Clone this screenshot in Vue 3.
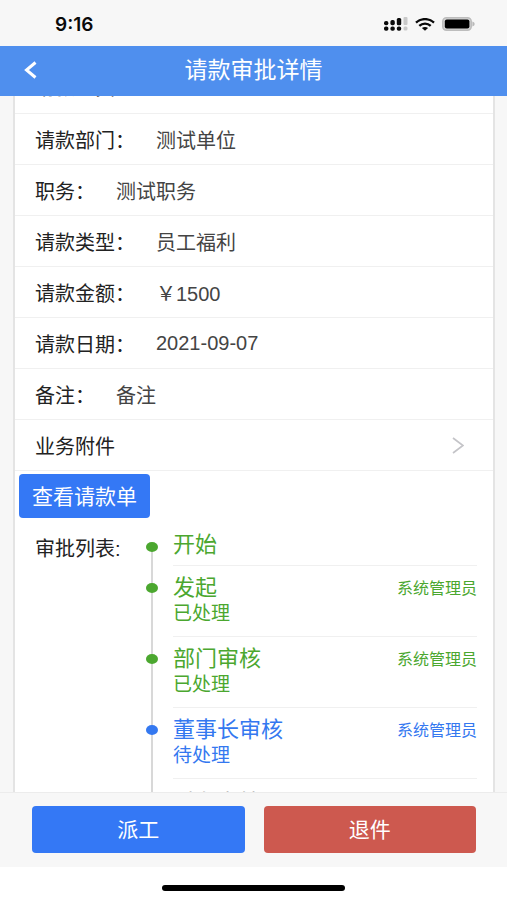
<script setup>
const fields = [
  { label: '请款人员：', value: '' },
  { label: '请款部门：', value: '测试单位' },
  { label: '职务：', value: '测试职务' },
  { label: '请款类型：', value: '员工福利' },
  { label: '请款金额：', value: '￥1500' },
  { label: '请款日期：', value: '2021-09-07' },
  { label: '备注：', value: '备注' }
]

const steps = [
  { name: '开始', tone: 'done' },
  { name: '发起', status: '已处理', person: '系统管理员', tone: 'done' },
  { name: '部门审核', status: '已处理', person: '系统管理员', tone: 'done' },
  { name: '董事长审核', status: '待处理', person: '系统管理员', tone: 'active' },
  { name: '财务审核', tone: 'idle' }
]
</script>

<template>
  <div class="screen">
    <div class="status-bar">
      <span class="clock">9:16</span>
      <div class="status-icons">
        <svg width="24" height="14" viewBox="0 0 24 14" aria-hidden="true">
          <g fill="#c9c9c9">
            <rect x="19.5" y="0" width="4" height="8" rx="1" />
            <rect x="19.5" y="9.5" width="4" height="4" rx="1.5" />
          </g>
          <g fill="#0a0a0a">
            <rect x="0" y="4" width="4.4" height="4.2" rx="2" />
            <rect x="6.4" y="3" width="4.4" height="5.2" rx="1.8" />
            <rect x="12.8" y="1" width="4.4" height="7.2" rx="1.5" />
            <rect x="0" y="9.5" width="4.4" height="4.2" rx="1.8" />
            <rect x="6.4" y="9.5" width="4.4" height="4.2" rx="1.8" />
            <rect x="12.8" y="9.5" width="4.4" height="4.2" rx="1.8" />
          </g>
        </svg>
        <svg width="20" height="13" viewBox="0 0 20 13" aria-hidden="true">
          <g fill="none" stroke="#0a0a0a" stroke-width="2.3">
            <path d="M1 4.6C6-.1 14-.1 19 4.6" />
            <path d="M4.3 7.9c3.2-3 8.2-3 11.4 0" />
          </g>
          <path d="M6.9 10.1c1.8-1.5 4.4-1.5 6.2 0L10 12.8z" fill="#0a0a0a" />
        </svg>
        <svg width="33" height="14" viewBox="0 0 33 14" aria-hidden="true">
          <rect x="0.8" y="0.8" width="28.4" height="12.4" rx="3.6" fill="#d6d6d6" stroke="#bdbdbd" stroke-width="1.6" />
          <rect x="2.8" y="2.5" width="24.6" height="9" rx="2" fill="#000" />
          <path d="M30.4 4.6c3 .8 3 4 0 4.8z" fill="#b9b9b9" />
        </svg>
      </div>
    </div>

    <header class="nav">
      <button class="back" type="button" aria-label="返回">
        <svg width="13" height="18" viewBox="0 0 13 18" aria-hidden="true">
          <path d="M11.5 1.5L2.5 9l9 7.5" fill="none" stroke="#fff" stroke-width="3" />
        </svg>
      </button>
      <h1 class="title">请款审批详情</h1>
    </header>

    <main class="content">
      <section class="card">
        <dl class="fields">
          <div v-for="f in fields" :key="f.label" class="row">
            <dt>{{ f.label }}</dt>
            <dd>{{ f.value }}</dd>
          </div>
        </dl>
        <a class="row attachment" href="#">
          <span>业务附件</span>
          <svg width="12" height="17" viewBox="0 0 12 17" aria-hidden="true">
            <path d="M1 1l10 7.5L1 16" fill="none" stroke="#c4c4c8" stroke-width="1.7" />
          </svg>
        </a>
        <button class="view" type="button">查看请款单</button>
        <div class="approval">
          <h2 class="approval-title">审批列表:</h2>
          <ol class="timeline">
            <li v-for="s in steps" :key="s.name" class="step" :class="s.tone">
              <div class="marker"><span class="dot"></span></div>
              <div class="step-body">
                <div class="step-text">
                  <span class="step-name">{{ s.name }}</span>
                  <span v-if="s.status" class="step-status">{{ s.status }}</span>
                </div>
                <span v-if="s.person" class="person">{{ s.person }}</span>
              </div>
            </li>
          </ol>
        </div>
      </section>
    </main>

    <footer class="actions">
      <button class="action assign" type="button">派工</button>
      <button class="action reject" type="button">退件</button>
    </footer>
    <div class="home-area"><span class="home-bar"></span></div>
  </div>
</template>

<style>
body {
  margin: 0;
  background: #fff;
}
</style>

<style scoped>
* {
  box-sizing: border-box;
}

.screen {
  display: flex;
  flex-direction: column;
  height: 100vh;
  overflow: hidden;
  background: #f7f7f7;
  color: #222;
  font-family: "Liberation Sans", "Noto Sans CJK SC", sans-serif;
  font-size: 20px;
}

button {
  border: 0;
  padding: 0;
  font-family: inherit;
  color: #fff;
}

.status-bar {
  flex: none;
  display: flex;
  align-items: center;
  justify-content: space-between;
  height: 46px;
  padding: 2px 32px 0 55px;
}

.clock {
  font-family: Inter, sans-serif;
  font-size: 19px;
  font-weight: 600;
  color: #0a0a0a;
}

.status-icons {
  display: flex;
  align-items: center;
  gap: 7px;
}

.nav {
  flex: none;
  display: grid;
  grid-template-columns: 48px 1fr 48px;
  align-items: center;
  height: 50px;
  padding-bottom: 2px;
  background: #4f8fee;
}

.back {
  display: flex;
  align-items: center;
  height: 48px;
  padding-left: 24px;
  background: none;
}

.title {
  margin: 0;
  text-align: center;
  font-size: 23px;
  font-weight: 400;
  line-height: 44px;
  color: #fff;
}

.content {
  flex: 1;
  min-height: 0;
  overflow: hidden;
  padding: 0 12px 0 13px;
}

/* The list is scrolled part of the way through its first row. */
.card {
  margin-top: -33px;
  border: solid #e4e4e4;
  border-width: 0 2px;
  background: #fff;
}

.fields {
  margin: 0;
}

.row {
  display: flex;
  align-items: center;
  height: 51px;
  padding: 0 29px 0 20px;
  border-bottom: 1px solid #f0f0f0;
}

.fields .row:first-child {
  padding-bottom: 4px;
}

dt {
  flex: none;
}

dd {
  margin: 0 0 0 21px;
  color: #444;
}

.attachment {
  justify-content: space-between;
  color: inherit;
  text-decoration: none;
}

.view {
  display: block;
  height: 44px;
  margin: 3px 0 0 4px;
  padding: 0 13px 3px;
  border-radius: 4px;
  background: #3478f5;
  font-size: 21px;
}

.approval {
  display: flex;
  padding: 10px 16px 0 20px;
}

.approval-title {
  flex: none;
  width: 110px;
  margin: 6px 0 0;
  font-size: 20px;
  font-weight: 400;
  line-height: 30px;
}

.timeline {
  flex: 1;
  margin: 0;
  padding: 0;
  list-style: none;
}

.step {
  display: flex;
}

.marker {
  position: relative;
  flex: none;
  width: 14px;
  margin-right: 14px;
}

.marker::before {
  content: "";
  position: absolute;
  top: 0;
  bottom: 0;
  left: 6px;
  width: 2px;
  background: #d8d8d8;
}

.step:first-child .marker::before {
  top: 20px;
}

.dot {
  position: absolute;
  top: 17px;
  left: 1px;
  width: 12px;
  height: 10px;
  border-radius: 50%;
  background: currentColor;
}

.step-body {
  flex: 1;
  display: flex;
  justify-content: space-between;
  min-height: 71px;
  padding-top: 8px;
  border-bottom: 1px solid #f0f0f0;
}

.step:first-child .step-body {
  min-height: 38px;
  padding-top: 3px;
}

.step:first-child .dot {
  top: 14px;
}

.step-text {
  display: flex;
  flex-direction: column;
}

.step-name {
  font-size: 22px;
  line-height: 28px;
}

.step-status {
  font-size: 19px;
  line-height: 24px;
}

.person {
  font-size: 16px;
  line-height: 30px;
}

.done {
  color: #4ba72f;
}

.active {
  color: #3478f0;
}

.idle {
  color: #999;
}

.idle .step-body {
  padding-top: 10px;
}

.actions {
  flex: none;
  display: flex;
  gap: 19px;
  padding: 13px 31px 14px 32px;
  border-top: 1px solid #ececec;
  background: #f7f7f7;
}

.action {
  flex: 1;
  height: 47px;
  padding-bottom: 3px;
  border-radius: 4px;
  font-size: 21px;
}

.assign {
  background: #3478f5;
}

.reject {
  background: #cd594f;
}

.home-area {
  flex: none;
  display: flex;
  justify-content: center;
  height: 33px;
  padding-top: 18px;
  background: #fff;
}

.home-bar {
  width: 36%;
  height: 6px;
  border-radius: 3px;
  background: #000;
}
</style>
